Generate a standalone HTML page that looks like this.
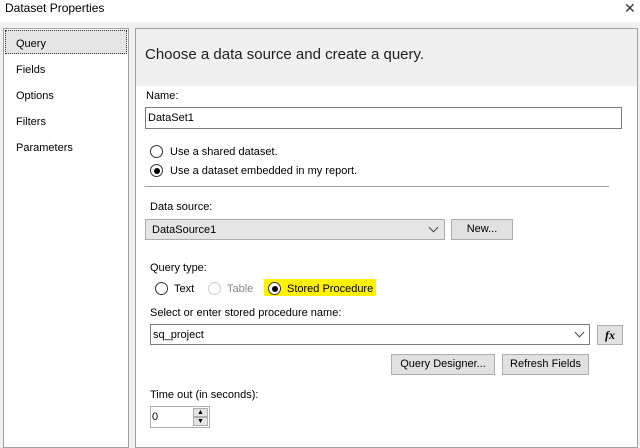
<!DOCTYPE html>
<html><head><style>
*{margin:0;padding:0;box-sizing:border-box}
body{width:640px;height:443px;background:#f0f0f0;font-family:"Segoe UI","Liberation Sans",sans-serif;font-size:11px;color:#000;position:relative;overflow:hidden}
.a{position:absolute}
.t{position:absolute;white-space:nowrap;line-height:14px;margin-top:1px}
.box{position:absolute;background:#fff;border:1px solid #7a7a7a}
.btn{position:absolute;background:#e1e1e1;border:1px solid #adadad;text-align:center;line-height:19px}
.rad{position:absolute;width:13px;height:13px;border:1px solid #333;border-radius:50%;background:#fff}
.rad.on::after{content:"";position:absolute;left:2.5px;top:2.5px;width:6px;height:6px;border-radius:50%;background:#000}
.chev{position:absolute;width:7px;height:7px;border-right:1px solid #444;border-bottom:1px solid #444;transform:rotate(45deg)}
</style></head><body>
<div class="a" style="left:0;top:0;width:640px;height:22px;background:#fff"></div>
<div class="t" style="left:5px;top:0;font-size:12px">Dataset Properties</div>
<div class="t" style="left:624px;top:0;font-size:14px;font-weight:300;color:#333">✕</div>

<div class="a" style="left:3px;top:28px;width:126px;height:420px;background:#fff;border:1px solid #a0a0a0"></div>
<div class="a" style="left:5px;top:30px;width:122px;height:24px;background:#e5e5e5;border:1px dotted #333"></div>
<div class="t" style="left:16px;top:36px">Query</div>
<div class="t" style="left:16px;top:62px">Fields</div>
<div class="t" style="left:16px;top:88px">Options</div>
<div class="t" style="left:16px;top:114px">Filters</div>
<div class="t" style="left:16px;top:140px">Parameters</div>

<div class="a" style="left:135px;top:28px;width:503px;height:420px;background:#fff;border:1px solid #a0a0a0"></div>
<div class="a" style="left:136px;top:29px;width:501px;height:57px;background:#f0f0f0"></div>
<div class="t" style="left:145px;top:44px;font-size:15px;line-height:20px;color:#1e1e1e">Choose a data source and create a query.</div>

<div class="t" style="left:146px;top:88px">Name:</div>
<div class="box" style="left:145px;top:107px;width:477px;height:22px"></div>
<div class="t" style="left:148px;top:110px">DataSet1</div>

<div class="rad" style="left:150px;top:145px"></div>
<div class="t" style="left:170px;top:144px">Use a shared dataset.</div>
<div class="rad on" style="left:150px;top:164px"></div>
<div class="t" style="left:170px;top:163px">Use a dataset embedded in my report.</div>
<div class="a" style="left:145px;top:186px;width:464px;height:1px;background:#a0a0a0"></div>

<div class="t" style="left:150px;top:199px">Data source:</div>
<div class="box" style="left:145px;top:219px;width:300px;height:21px;border-color:#adadad;background:#e5e5e5"></div>
<div class="t" style="left:152px;top:222px">DataSource1</div>
<div class="chev" style="left:430px;top:224px"></div>
<div class="btn" style="left:451px;top:219px;width:62px;height:21px">New...</div>

<div class="t" style="left:150px;top:260px">Query type:</div>
<div class="rad" style="left:155px;top:282px"></div>
<div class="t" style="left:174px;top:281px">Text</div>
<div class="rad" style="left:208px;top:282px;border-color:#ccc"></div>
<div class="t" style="left:227px;top:281px;color:#888">Table</div>
<div class="a" style="left:264px;top:279px;width:112px;height:17px;background:#fff200"></div>
<div class="rad on" style="left:268px;top:282px"></div>
<div class="t" style="left:287px;top:281px">Stored Procedure</div>

<div class="t" style="left:150px;top:305px">Select or enter stored procedure name:</div>
<div class="box" style="left:150px;top:324px;width:440px;height:21px"></div>
<div class="t" style="left:153px;top:327px">sq_project</div>
<div class="chev" style="left:576px;top:329px"></div>
<div class="btn" style="left:597px;top:325px;width:26px;height:20px;font-family:'Liberation Serif',serif;font-style:italic;font-weight:bold;font-size:12px">fx</div>

<div class="btn" style="left:391px;top:354px;width:104px;height:21px">Query Designer...</div>
<div class="btn" style="left:502px;top:354px;width:87px;height:21px">Refresh Fields</div>

<div class="t" style="left:150px;top:387px">Time out (in seconds):</div>
<div class="box" style="left:150px;top:406px;width:60px;height:22px;border-color:#adadad"></div>
<div class="t" style="left:152px;top:409px">0</div>
<div class="a" style="left:193px;top:408px;width:15px;height:9px;background:#e5e5e5;border:1px solid #adadad;font-size:7px;text-align:center;line-height:7px">▲</div>
<div class="a" style="left:193px;top:417px;width:15px;height:9px;background:#e5e5e5;border:1px solid #adadad;font-size:7px;text-align:center;line-height:7px">▼</div>
</body></html>
